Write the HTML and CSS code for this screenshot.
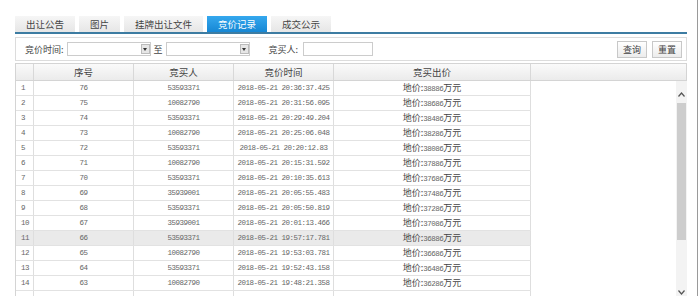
FILE: index.html
```html
<!DOCTYPE html>
<html lang="zh-CN">
<head>
<meta charset="utf-8">
<link rel="stylesheet" href="styles.css">
</head>
<body>
<div class="frame">
  <div class="tabs">
    <div class="tab">出让公告</div>
    <div class="tab">图片</div>
    <div class="tab">挂牌出让文件</div>
    <div class="tab active">竞价记录</div>
    <div class="tab">成交公示</div>
  </div>
  <div class="toolbar">
    <span class="label">竞价时间:</span>
    <div class="select"><span class="arrow"></span></div>
    <span class="to">至</span>
    <div class="select"><span class="arrow"></span></div>
    <span class="label buyer">竞买人:</span>
    <div class="input"></div>
    <div class="spacer"></div>
    <button class="btn">查询</button>
    <button class="btn">重置</button>
  </div>
  <div class="grid">
    <div class="head">
      <div class="hc"></div>
      <div class="hc">序号</div>
      <div class="hc">竞买人</div>
      <div class="hc">竞价时间</div>
      <div class="hc">竞买出价</div>
      <div class="hc last"></div>
    </div>
    <div class="body">
      <div class="rows">
        <div class="row"><div class="c idx">1</div><div class="c n">76</div><div class="c n">53593371</div><div class="c n">2018-05-21 20:36:37.425</div><div class="c p">地价:<span class="n">38886</span>万元</div></div>
        <div class="row"><div class="c idx">2</div><div class="c n">75</div><div class="c n">10082790</div><div class="c n">2018-05-21 20:31:56.095</div><div class="c p">地价:<span class="n">38686</span>万元</div></div>
        <div class="row"><div class="c idx">3</div><div class="c n">74</div><div class="c n">53593371</div><div class="c n">2018-05-21 20:29:49.204</div><div class="c p">地价:<span class="n">38486</span>万元</div></div>
        <div class="row"><div class="c idx">4</div><div class="c n">73</div><div class="c n">10082790</div><div class="c n">2018-05-21 20:25:06.048</div><div class="c p">地价:<span class="n">38286</span>万元</div></div>
        <div class="row"><div class="c idx">5</div><div class="c n">72</div><div class="c n">53593371</div><div class="c n">2018-05-21 20:20:12.83</div><div class="c p">地价:<span class="n">38086</span>万元</div></div>
        <div class="row"><div class="c idx">6</div><div class="c n">71</div><div class="c n">10082790</div><div class="c n">2018-05-21 20:15:31.592</div><div class="c p">地价:<span class="n">37886</span>万元</div></div>
        <div class="row"><div class="c idx">7</div><div class="c n">70</div><div class="c n">53593371</div><div class="c n">2018-05-21 20:10:35.613</div><div class="c p">地价:<span class="n">37686</span>万元</div></div>
        <div class="row"><div class="c idx">8</div><div class="c n">69</div><div class="c n">35939001</div><div class="c n">2018-05-21 20:05:55.483</div><div class="c p">地价:<span class="n">37486</span>万元</div></div>
        <div class="row"><div class="c idx">9</div><div class="c n">68</div><div class="c n">53593371</div><div class="c n">2018-05-21 20:05:50.819</div><div class="c p">地价:<span class="n">37286</span>万元</div></div>
        <div class="row"><div class="c idx">10</div><div class="c n">67</div><div class="c n">35939001</div><div class="c n">2018-05-21 20:01:13.466</div><div class="c p">地价:<span class="n">37086</span>万元</div></div>
        <div class="row hover"><div class="c idx">11</div><div class="c n">66</div><div class="c n">53593371</div><div class="c n">2018-05-21 19:57:17.781</div><div class="c p">地价:<span class="n">36886</span>万元</div></div>
        <div class="row"><div class="c idx">12</div><div class="c n">65</div><div class="c n">10082790</div><div class="c n">2018-05-21 19:53:03.781</div><div class="c p">地价:<span class="n">36686</span>万元</div></div>
        <div class="row"><div class="c idx">13</div><div class="c n">64</div><div class="c n">53593371</div><div class="c n">2018-05-21 19:52:43.158</div><div class="c p">地价:<span class="n">36486</span>万元</div></div>
        <div class="row"><div class="c idx">14</div><div class="c n">63</div><div class="c n">10082790</div><div class="c n">2018-05-21 19:48:21.358</div><div class="c p">地价:<span class="n">36286</span>万元</div></div>
        <div class="row"><div class="c idx"></div><div class="c n"></div><div class="c n"></div><div class="c n"></div><div class="c p"></div></div>
      </div>
      <div class="fill"></div>
      <div class="scroll">
        <svg class="chev up" width="7" height="5" viewBox="0 0 7 5"><path d="M0.5 4.5 L3.5 1 L6.5 4.5" fill="none" stroke="#555" stroke-width="1.2"/></svg>
        <div class="thumb"></div>
        <svg class="chev down" width="7" height="5" viewBox="0 0 7 5"><path d="M0.5 0.5 L3.5 4 L6.5 0.5" fill="none" stroke="#555" stroke-width="1.2"/></svg>
      </div>
    </div>
  </div>
</div>
</body>
</html>
```
FILE: styles.css
```css
html, body {
  margin: 0;
  padding: 0;
  background: #fff;
}
body {
  font-family: "Noto Sans CJK SC", "Noto Sans", sans-serif;
  color: #444;
}
.frame {
  width: 698px;
  height: 296px;
  box-sizing: border-box;
  padding: 16px 10px 0 15px;
  border-right: 1px solid #9a9a9a;
  overflow: hidden;
}
.tabs {
  display: flex;
  gap: 4px;
  height: 16px;
  border-bottom: 2px solid #3d7ca2;
}
.tab {
  padding: 0 11px;
  line-height: 16px;
  font-size: 9.5px;
  color: #444;
  background: linear-gradient(#f6f6f6, #e6e6e6);
}
.tab.active {
  color: #fff;
  background: linear-gradient(#35a8ee, #1687d4);
}
.toolbar {
  margin-top: 3px;
  height: 24px;
  box-sizing: border-box;
  border: 1px solid #dcdcdc;
  display: flex;
  align-items: center;
  padding: 0 4px 0 9px;
  font-size: 9px;
}
.label {
  margin-right: 3px;
  white-space: nowrap;
}
.label.buyer {
  margin-left: 19px;
  margin-right: 5px;
}
.select {
  width: 84px;
  height: 14px;
  box-sizing: border-box;
  border: 1px solid #cccccc;
  display: flex;
  justify-content: flex-end;
  align-items: center;
}
.arrow {
  width: 9px;
  height: 10px;
  box-sizing: border-box;
  border: 1px solid #bbbbbb;
  background: #e6e6e6;
  display: flex;
  align-items: center;
  justify-content: center;
}
.arrow::after {
  content: "";
  border-left: 2.5px solid transparent;
  border-right: 2.5px solid transparent;
  border-top: 3px solid #333;
}
.to {
  margin: 0 3px;
}
.input {
  width: 70px;
  height: 14px;
  box-sizing: border-box;
  border: 1px solid #cccccc;
}
.spacer {
  flex: 1;
}
.btn {
  width: 30px;
  height: 17px;
  margin: 0 0 0 5px;
  padding: 0;
  box-sizing: border-box;
  border: 1px solid #c8c8c8;
  background: linear-gradient(#ffffff, #ececec);
  font-family: "Noto Sans CJK SC", sans-serif;
  font-size: 9px;
  color: #444;
  line-height: 15px;
}
.grid {
  margin-top: 2px;
}
.head {
  display: grid;
  grid-template-columns: 18px 100px 100px 100px 197px 1fr;
  height: 18px;
  box-sizing: border-box;
  border: 1px solid #d4d4d4;
  background: linear-gradient(#fafafa, #ebebeb);
}
.hc {
  border-right: 1px solid #d8d8d8;
  font-size: 9.5px;
  line-height: 16px;
  text-align: center;
  color: #444;
}
.hc.last {
  border-right: 0;
}
.body {
  display: flex;
  height: 215px;
  border-left: 1px solid #d4d4d4;
  overflow: hidden;
}
.rows {
  width: 515px;
  flex: none;
}
.row {
  display: grid;
  grid-template-columns: 18px 100px 100px 100px 197px;
  height: 15px;
  box-sizing: border-box;
  border-bottom: 1px solid #e2e2e2;
}
.row.hover {
  background: #eaeaea;
}
.c {
  border-right: 1px solid #dedede;
  line-height: 14px;
  text-align: center;
  white-space: nowrap;
  overflow: hidden;
}
.n {
  font-family: "Liberation Mono", monospace;
  font-size: 7.5px;
  letter-spacing: -0.5px;
  color: #666;
}
.idx {
  text-align: left;
  padding-left: 5px;
  font-family: "Liberation Mono", monospace;
  font-size: 7.5px;
  letter-spacing: -0.5px;
  color: #666;
}
.p {
  font-size: 9px;
  color: #444;
}
.fill {
  flex: 1;
}
.scroll {
  width: 11px;
  flex: none;
  background: #f3f3f3;
  display: flex;
  flex-direction: column;
  align-items: center;
  padding-top: 11px;
  box-sizing: border-box;
}
.chev {
  display: block;
  flex: none;
}
.thumb {
  width: 9px;
  height: 137px;
  margin-top: 6px;
  background: #cdcdcd;
  flex: none;
}
.chev.down {
  margin-top: 50px;
}
```
